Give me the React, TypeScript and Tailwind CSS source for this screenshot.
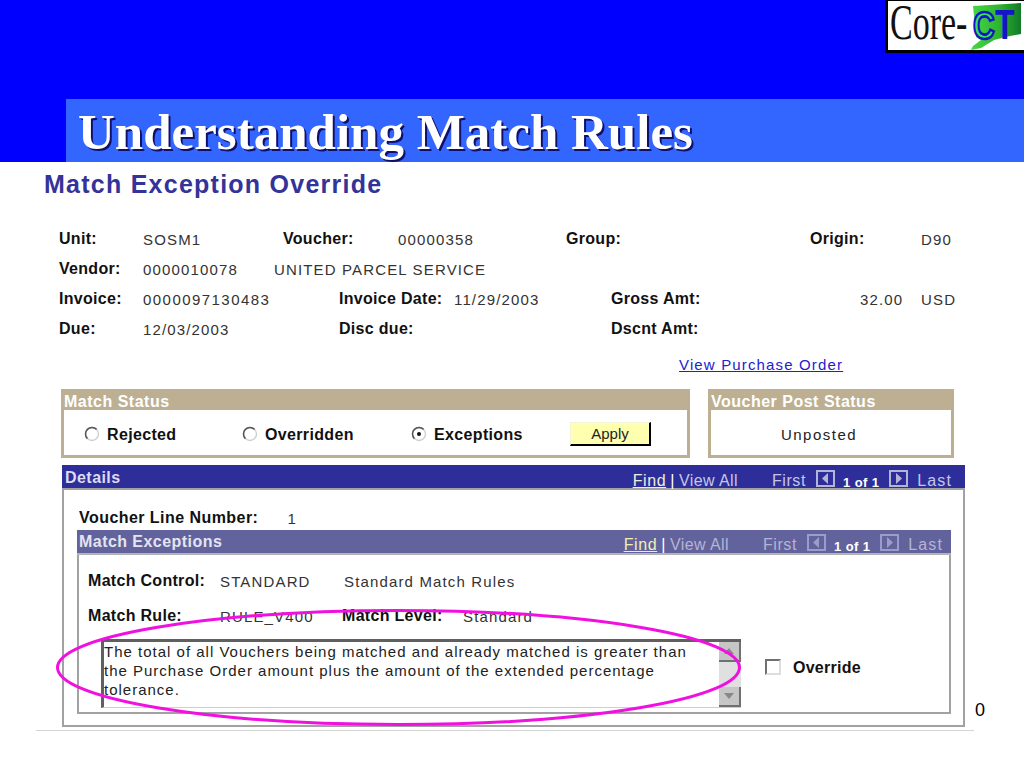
import React from 'react';

const Label = ({ w, children }: { w: string; children?: React.ReactNode }) => (
  <div className={`${w} shrink-0 text-[16px] font-bold text-[#111] tracking-[0.3px] whitespace-nowrap`}>{children}</div>
);

const Value = ({ w, children }: { w: string; children?: React.ReactNode }) => (
  <div className={`${w} shrink-0 pt-[2px] text-[15px] text-[#333] tracking-[1.15px] whitespace-nowrap`}>{children}</div>
);

const PagerArrow = ({ dir, tint }: { dir: 'left' | 'right'; tint: string }) => (
  <svg width="19" height="17" viewBox="0 0 19 17" className="shrink-0 -mt-[3px]">
    <rect x="1" y="1" width="17" height="15" fill="none" stroke={tint} strokeWidth="2" />
    <path d={dir === 'left' ? 'M12 3 L6 8.5 L12 14 Z' : 'M7 3 L13 8.5 L7 14 Z'} fill={tint} />
  </svg>
);

const Pager = ({ find, text, tint, pad }: { find: string; text: string; tint: string; pad: string }) => (
  <div className={`h-[23px] flex items-start text-[16px] leading-[16px] tracking-[0.6px] ${pad} ${text}`}>
    <span className={`underline ${find}`}>Find</span>
    <span className="ml-[4px] mr-[4px] text-white">|</span>
    <span className="tracking-[0.4px]">View All</span>
    <span className="ml-[34px] mr-[10px]">First</span>
    <PagerArrow dir="left" tint={tint} />
    <span className="ml-[8px] pt-[2px] text-[13px] leading-[16px] font-bold text-white tracking-[0.4px]">1 of 1</span>
    <span className="ml-[10px]">
      <PagerArrow dir="right" tint={tint} />
    </span>
    <span className="ml-[9px] tracking-[1.1px]">Last</span>
  </div>
);

const Radio = ({ label, checked, w }: { label: string; checked?: boolean; w: string }) => (
  <div className={`${w} flex items-center`}>
    <svg width="16" height="16" viewBox="0 0 16 16" className="shrink-0 -mt-[3px]">
      <circle cx="8" cy="8" r="6.5" fill="#fff" stroke="#cfcfcf" strokeWidth="1.4" />
      <path d="M3.4 12.6 A6.5 6.5 0 0 1 12.6 3.4" fill="none" stroke="#555" strokeWidth="1.5" />
      {checked && <circle cx="8" cy="8" r="2" fill="#111" />}
    </svg>
    <span className="ml-[7px] text-[16px] font-bold text-[#111] tracking-[0.35px]">{label}</span>
  </div>
);

const Logo = () => (
  <div className="w-[139px] h-[53px] border-l-[3px] border-b-[3px] border-t border-black bg-white">
    <svg width="136" height="49" viewBox="0 0 136 49" className="overflow-visible">
      <defs>
        <linearGradient id="ctMap" x1="0" y1="0" x2="1" y2="0">
          <stop offset="0" stopColor="#46d846" />
          <stop offset="0.55" stopColor="#2fb52f" />
          <stop offset="1" stopColor="#127a2a" />
        </linearGradient>
      </defs>
      <g transform="scale(1 1.47)">
        <text x="2" y="25.8" fontFamily="'Liberation Serif', serif" fontSize="34" fill="#111">Core-</text>
      </g>
      <path d="M85 5 L133 2 L133 33 L122 35 L106 39 L93 47 L83 49 L85 45 L93 39 L88 36 Z" fill="url(#ctMap)" />
      <g transform="scale(1 1.3)">
        <text x="85" y="29" fontFamily="'Liberation Sans', sans-serif" fontSize="30" fontWeight="700" fill="#3be05a" stroke="#1414c8" strokeWidth="2">C</text>
        <text x="107" y="29.5" fontFamily="'Liberation Sans', sans-serif" fontSize="32" fontWeight="700" fill="#1414c8">T</text>
      </g>
    </svg>
  </div>
);

export default function App() {
  return (
    <div className="w-[1024px] h-[768px] overflow-hidden bg-white font-['Liberation_Sans',Arial,sans-serif]">
      <div className="h-[162px] bg-[#0000ff] flex flex-col">
        <div className="h-[99px] flex justify-end items-start">
          <Logo />
        </div>
        <div className="ml-[66px] h-[63px] bg-[#3366ff] pl-[12px] pt-[3px] flex items-center">
          <h1 className="font-['Liberation_Serif',serif] font-bold text-[51px] leading-none text-white [text-shadow:2px_2px_0_#10106a] whitespace-nowrap">
            Understanding Match Rules
          </h1>
        </div>
      </div>

      <div className="relative h-[606px]">
        <h2 className="pl-[44px] pt-[8px] h-[48px] text-[25px] leading-[28px] font-bold text-[#333399] tracking-[1.25px]">
          Match Exception Override
        </h2>

        <div className="pl-[59px] pt-[14px] flex flex-col">
          <div className="h-[30px] flex items-center">
            <Label w="w-[84px]">Unit:</Label>
            <Value w="w-[140px]">SOSM1</Value>
            <Label w="w-[115px]">Voucher:</Label>
            <Value w="w-[168px]">00000358</Value>
            <Label w="w-[244px]">Group:</Label>
            <Label w="w-[111px]">Origin:</Label>
            <Value w="w-[40px]">D90</Value>
          </div>
          <div className="h-[30px] flex items-center">
            <Label w="w-[84px]">Vendor:</Label>
            <Value w="w-[131px]">0000010078</Value>
            <Value w="w-[300px]">UNITED PARCEL SERVICE</Value>
          </div>
          <div className="h-[30px] flex items-center">
            <Label w="w-[84px]">Invoice:</Label>
            <div className="w-[196px] shrink-0 pt-[2px] text-[15px] text-[#333] tracking-[1.45px]">0000097130483</div>
            <Label w="w-[115px]">Invoice Date:</Label>
            <Value w="w-[157px]">11/29/2003</Value>
            <Label w="w-[249px]">Gross Amt:</Label>
            <div className="w-[43px] shrink-0 pt-[2px] text-right text-[15px] text-[#333] tracking-[1.15px]">32.00</div>
            <div className="ml-[18px] pt-[2px] text-[15px] text-[#333] tracking-[1.15px]">USD</div>
          </div>
          <div className="h-[30px] flex items-center">
            <Label w="w-[84px]">Due:</Label>
            <Value w="w-[196px]">12/03/2003</Value>
            <Label w="w-[272px]">Disc due:</Label>
            <Label w="w-[120px]">Dscnt Amt:</Label>
          </div>
        </div>

        <div className="h-[45px] pl-[679px] pt-[10px] text-[15px] tracking-[1.15px] text-[#2222cc] underline">
          View Purchase Order
        </div>

        <div className="pl-[61px] flex gap-[18px]">
          <section className="w-[629px] h-[69px] border-[3px] border-t-0 border-[#bdb092] flex flex-col">
            <div className="h-[21px] -mx-[3px] px-[3px] bg-[#bdb092] text-[16px] leading-[25px] font-bold text-white tracking-[0.5px]">
              Match Status
            </div>
            <div className="flex-1 flex items-center pl-[20px] pt-[5px]">
              <Radio label="Rejected" w="w-[158px]" />
              <Radio label="Overridden" w="w-[169px]" />
              <Radio label="Exceptions" checked w="w-[159px]" />
              <button className="w-[81px] h-[24px] -mt-[2px] bg-[#ffffb0] border border-t-[#f4f4d8] border-l-[#f4f4d8] border-r-2 border-b-2 border-r-black border-b-black text-[15px] leading-[18px] text-[#222]">
                Apply
              </button>
            </div>
          </section>
          <section className="w-[246px] h-[69px] border-[3px] border-t-0 border-[#bdb092] flex flex-col">
            <div className="h-[21px] -mx-[3px] px-[3px] bg-[#bdb092] text-[16px] leading-[25px] font-bold text-white tracking-[0.5px] whitespace-nowrap">
              Voucher Post Status
            </div>
            <div className="flex-1 flex items-center justify-center pr-[24px] pt-[5px] text-[15px] text-[#222] tracking-[1.5px]">
              Unposted
            </div>
          </section>
        </div>

        <section className="ml-[62px] mt-[7px] w-[903px] h-[262px] border-2 border-t-0 border-[#a2a2a2] flex flex-col">
          <div className="h-[25px] -mx-[2px] pl-[3px] pr-[13px] bg-[#2e2e9a] border-b-2 border-[#a2a2a2] flex items-center justify-between">
            <span className="pt-[2px] text-[16px] font-bold text-[#dcdcf0] tracking-[0.45px]">Details</span>
            <Pager find="text-[#eeeedd]" text="text-[#c6c6e6]" tint="#b4b4d8" pad="pt-[8px]" />
          </div>
          <div className="h-[40px] pl-[15px] pt-[16px] flex items-center">
            <span className="text-[16px] font-bold text-[#111] tracking-[0.45px]">Voucher Line Number:</span>
            <span className="ml-[29px] pt-[2px] text-[15px] text-[#333]">1</span>
          </div>
          <section className="ml-[13px] w-[874px] h-[184px] border-2 border-t-0 border-[#a2a2a2] flex flex-col">
            <div className="h-[25px] -mx-[2px] pl-[2px] pr-[8px] bg-[#62629c] border-b-2 border-[#b4b4b4] flex items-center justify-between">
              <span className="text-[16px] font-bold text-[#e4e4f0] tracking-[0.45px]">Match Exceptions</span>
              <Pager find="text-[#f0f0b0]" text="text-[#b4b4d4]" tint="#9c9cc8" pad="pt-[7px]" />
            </div>
            <div className="pl-[9px] pt-[18px] h-[34px] flex items-center">
              <Label w="w-[132px]">Match Control:</Label>
              <Value w="w-[124px]">STANDARD</Value>
              <Value w="w-[300px]">Standard Match Rules</Value>
            </div>
            <div className="pl-[9px] pt-[14px] h-[40px] flex items-center">
              <Label w="w-[132px]">Match Rule:</Label>
              <Value w="w-[122px]">RULE_V400</Value>
              <Label w="w-[121px]">Match Level:</Label>
              <Value w="w-[100px]">Standard</Value>
            </div>
            <div className="pl-[22px] pt-[10px] flex">
              <div className="w-[640px] h-[69px] border-t-[3px] border-l-[3px] border-[#606060] border-b border-b-[#cfcfcf] flex">
                <p className="flex-1 pr-[10px] text-[15px] leading-[19px] text-[#222] tracking-[1px]">
                  The total of all Vouchers being matched and already matched is greater than the Purchase Order amount plus the amount of the extended percentage tolerance.
                </p>
                <div className="w-[22px] shrink-0 flex flex-col justify-between bg-[#e0e0e0]">
                  <div className="h-[20px] bg-[#c6c6c6] border-r-2 border-b-2 border-[#707070] flex items-center justify-center">
                    <svg width="10" height="6" viewBox="0 0 10 6"><path d="M5 0 L10 6 L0 6 Z" fill="#888" /></svg>
                  </div>
                  <div className="h-[20px] bg-[#c6c6c6] border-r-2 border-b-2 border-[#707070] flex items-center justify-center">
                    <svg width="10" height="6" viewBox="0 0 10 6"><path d="M0 0 L10 0 L5 6 Z" fill="#888" /></svg>
                  </div>
                </div>
              </div>
              <div className="ml-[24px] flex items-center self-start mt-[17px]">
                <span className="w-[16px] h-[16px] -mt-[3px] bg-white border-2 border-[#707070] border-r-[#ddd] border-b-[#ddd]" />
                <span className="ml-[12px] text-[16px] font-bold text-[#111] tracking-[0.25px]">Override</span>
              </div>
            </div>
          </section>
        </section>

        <div className="ml-[36px] mt-[3px] w-[938px] h-[1px] bg-[#d4d4d4]" />

        <span className="absolute left-[975px] top-[538px] text-[18px] leading-[20px] text-black">0</span>

        <svg className="absolute left-0 top-0 pointer-events-none" width="1024" height="606" viewBox="0 0 1024 606">
          <ellipse cx="398.5" cy="505.5" rx="341" ry="57" fill="none" stroke="#f010e0" strokeWidth="3" />
        </svg>
      </div>
    </div>
  );
}
